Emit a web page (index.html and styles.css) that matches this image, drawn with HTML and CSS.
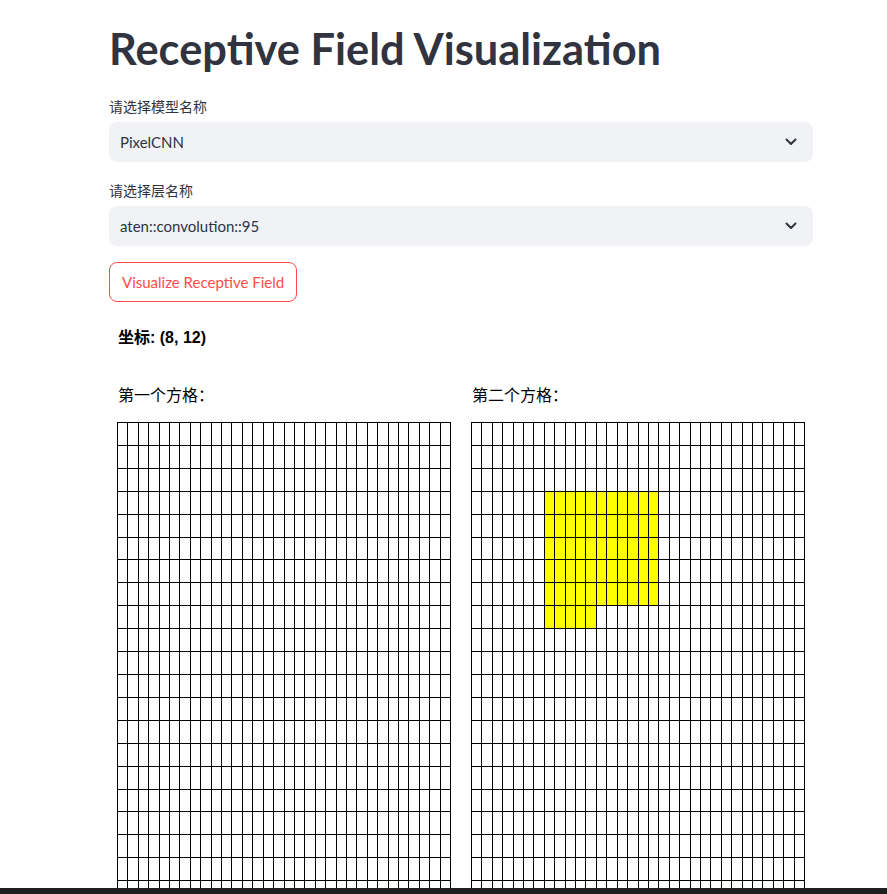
FILE: index.html
```html
<!DOCTYPE html>
<html lang="zh">
<head>
<meta charset="utf-8">
<title>Receptive Field Visualization</title>
<link rel="stylesheet" href="styles.css">
</head>
<body>
<main class="page">
  <h1 class="title">Receptive Field Visualization</h1>

  <div class="field">
    <label class="field-label">请选择模型名称</label>
    <div class="select">
      <span class="select-value">PixelCNN</span>
      <svg class="chevron" width="12" height="8" viewBox="0 0 12 8"><path d="M1.5 1.5 L6 6 L10.5 1.5" fill="none" stroke="#31333F" stroke-width="2" stroke-linecap="round" stroke-linejoin="round"/></svg>
    </div>
  </div>

  <div class="field">
    <label class="field-label">请选择层名称</label>
    <div class="select">
      <span class="select-value">aten::convolution::95</span>
      <svg class="chevron" width="12" height="8" viewBox="0 0 12 8"><path d="M1.5 1.5 L6 6 L10.5 1.5" fill="none" stroke="#31333F" stroke-width="2" stroke-linecap="round" stroke-linejoin="round"/></svg>
    </div>
  </div>

  <button class="btn">Visualize Receptive Field</button>

  <section class="result">
    <p class="coord">坐标: (8, 12)</p>
    <div class="grids">
      <div class="grid-col">
        <p class="grid-title">第一个方格：</p>
        <div class="grid" id="grid1"></div>
      </div>
      <div class="grid-col">
        <p class="grid-title">第二个方格：</p>
        <div class="grid" id="grid2"></div>
      </div>
    </div>
  </section>
</main>
<div class="bottom-bar"></div>
<script src="script.js"></script>
</body>
</html>
```

FILE: styles.css
```css
* { box-sizing: border-box; }
html, body { margin: 0; padding: 0; background: #fff; }
body {
  font-family: "Lato", "Noto Sans CJK SC", sans-serif;
  color: #31333F;
}
.page {
  width: 704px;
  margin-left: 109px;
  padding-top: 20px;
}
.title {
  margin: 0;
  font-size: 43.4px;
  line-height: 56px;
  font-weight: 700;
  color: #31333F;
}
.field { margin-top: 20px; }
.field + .field { margin-top: 18px; }
.field-label {
  display: block;
  font-size: 14px;
  line-height: 20px;
  margin-bottom: 6px;
  font-family: "Noto Sans CJK SC", sans-serif;
}
.select {
  height: 40px;
  background: #F0F2F6;
  border-radius: 8px;
  display: flex;
  align-items: center;
  justify-content: space-between;
  padding: 0 16px 0 11px;
}
.select-value { font-size: 15px; }
.chevron { display: block; }
.btn {
  margin-top: 16px;
  height: 40px;
  padding: 0 12px;
  background: #fff;
  border: 1px solid #FF4B4B;
  border-radius: 8px;
  color: #FF4B4B;
  font-family: "Lato", sans-serif;
  font-size: 15px;
}
.result {
  padding-left: 8px;
  color: #000;
  font-family: "Liberation Sans", "Noto Sans CJK SC", sans-serif;
}
.coord {
  margin: 26px 0 0 1px;
  font-size: 16px;
  line-height: 20px;
  font-weight: 700;
}
.grids {
  display: flex;
  gap: 20px;
  margin-top: 38px;
}
.grid-title {
  margin: 0 0 16px 1px;
  font-size: 16px;
  line-height: 20px;
}
.grid {
  width: 334px;
  height: 734px;
  display: grid;
  grid-template-columns: repeat(32, 1fr);
  grid-template-rows: repeat(32, 1fr);
  border-left: 1px solid #000;
  border-top: 1px solid #000;
}
.cell {
  border-right: 1px solid #000;
  border-bottom: 1px solid #000;
  background: #fff;
}
.cell.hit { background: #FFFF00; }
.bottom-bar {
  position: fixed;
  left: 0;
  right: 0;
  bottom: 0;
  height: 6px;
  background: #1f1f1f;
}
```

FILE: script.js
```js
(function () {
  var N = 32;
  var cy = 8, cx = 12, k = 5;
  function inField(r, c) {
    if (r < cy - k || r > cy) return false;
    if (c < cx - k || c > cx + k) return false;
    if (r === cy && c >= cx) return false;
    return true;
  }
  function build(id, mark) {
    var g = document.getElementById(id);
    var frag = document.createDocumentFragment();
    for (var r = 0; r < N; r++) {
      for (var c = 0; c < N; c++) {
        var d = document.createElement('div');
        d.className = 'cell' + (mark && inField(r, c) ? ' hit' : '');
        frag.appendChild(d);
      }
    }
    g.appendChild(frag);
  }
  build('grid1', false);
  build('grid2', true);
})();
```
